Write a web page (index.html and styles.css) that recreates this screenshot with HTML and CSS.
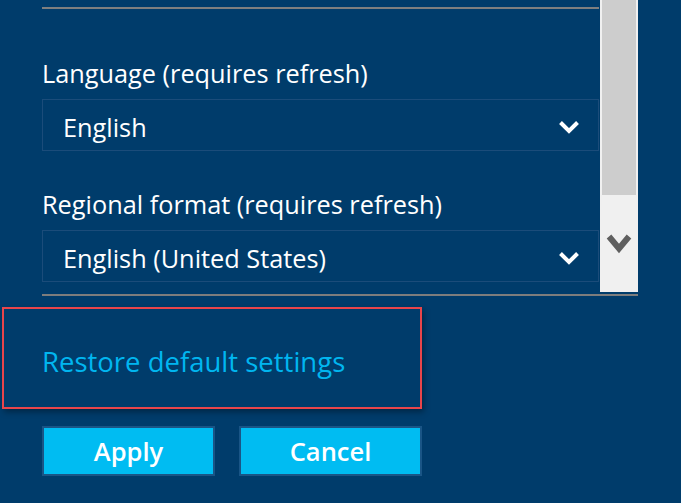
FILE: index.html
```html
<!DOCTYPE html>
<html lang="en">
<head>
<meta charset="utf-8">
<title>Settings</title>
<link rel="stylesheet" href="styles.css">
</head>
<body>
<div class="scroll-area">
  <div class="scroll-content">
    <div class="rule"></div>
    <div class="field first">
      <div class="label">Language (requires refresh)</div>
      <div class="select">
        <span class="value">English</span>
        <svg class="chev" width="22" height="14" viewBox="0 0 22 14"><polyline points="2.5,2.5 11,11 19.5,2.5" fill="none" stroke="#fff" stroke-width="4"/></svg>
      </div>
    </div>
    <div class="field">
      <div class="label">Regional format (requires refresh)</div>
      <div class="select">
        <span class="value">English (United States)</span>
        <svg class="chev" width="22" height="14" viewBox="0 0 22 14"><polyline points="2.5,2.5 11,11 19.5,2.5" fill="none" stroke="#fff" stroke-width="4"/></svg>
      </div>
    </div>
  </div>
  <div class="scrollbar">
    <div class="thumb"></div>
    <svg class="sb-arrow" width="26" height="21" viewBox="0 0 26 21"><polyline points="3,3.5 13,15.5 23,3.5" fill="none" stroke="#5f5f5f" stroke-width="6"/></svg>
  </div>
</div>
<div class="divider"></div>
<div class="restore-box">
  <a class="restore-link">Restore default settings</a>
</div>
<div class="actions">
  <button class="btn apply">Apply</button>
  <button class="btn cancel">Cancel</button>
</div>
</body>
</html>
```

FILE: styles.css
```css
html, body {
  margin: 0;
  padding: 0;
}
body {
  background: #003c6b;
  width: 681px;
  height: 503px;
  overflow: hidden;
  font-family: "Open Sans", "Noto Sans", sans-serif;
  color: #fff;
}
.scroll-area {
  display: flex;
  margin-left: 42px;
  width: 596px;
  height: 292px;
}
.scroll-content {
  width: 558px;
  overflow: hidden;
}
.rule {
  margin-top: 7px;
  width: 557px;
  height: 2px;
  background: #7f7f7f;
}
.field {
  margin-top: 37px;
}
.field.first {
  margin-top: 48px;
}
.label {
  font-size: 25.3px;
  line-height: 32px;
  white-space: nowrap;
}
.select {
  box-sizing: border-box;
  margin-top: 10px;
  width: 557px;
  height: 52px;
  border: 1px solid #1b4c7a;
  padding: 7px 18px 3px 20px;
  display: flex;
  justify-content: space-between;
  align-items: flex-start;
}
.value {
  font-size: 25.3px;
  line-height: 40px;
  white-space: nowrap;
}
.chev {
  margin-top: 13px;
}
.scrollbar {
  box-sizing: border-box;
  width: 38px;
  height: 292px;
  background: #f0f0f0;
  padding: 0 2px;
  display: flex;
  flex-direction: column;
  align-items: center;
}
.thumb {
  width: 34px;
  height: 195px;
  background: #cdcdcd;
}
.sb-arrow {
  margin-top: 38px;
}
.divider {
  margin-left: 42px;
  margin-top: 2px;
  width: 596px;
  height: 2px;
  background: #7d7d7d;
}
.restore-box {
  box-sizing: border-box;
  margin-left: 2px;
  margin-top: 11px;
  width: 420px;
  height: 102px;
  border: 2px solid #e8454b;
  box-shadow: 2px 3px 6px rgba(0, 0, 0, 0.35);
  padding: 33px 0 0 38px;
}
.restore-link {
  color: #00b6f0;
  font-size: 27.5px;
  line-height: 40px;
  white-space: nowrap;
}
.actions {
  display: flex;
  gap: 24px;
  margin-left: 42px;
  margin-top: 17px;
}
.btn {
  box-sizing: border-box;
  height: 50px;
  background: #00bcf2;
  border: 2px solid #1a5586;
  color: #fff;
  font-family: "Open Sans", "Noto Sans", sans-serif;
  font-weight: 600;
  font-size: 25.5px;
  line-height: 46px;
  padding: 0;
}
.apply {
  width: 173px;
}
.cancel {
  width: 183px;
}
```
